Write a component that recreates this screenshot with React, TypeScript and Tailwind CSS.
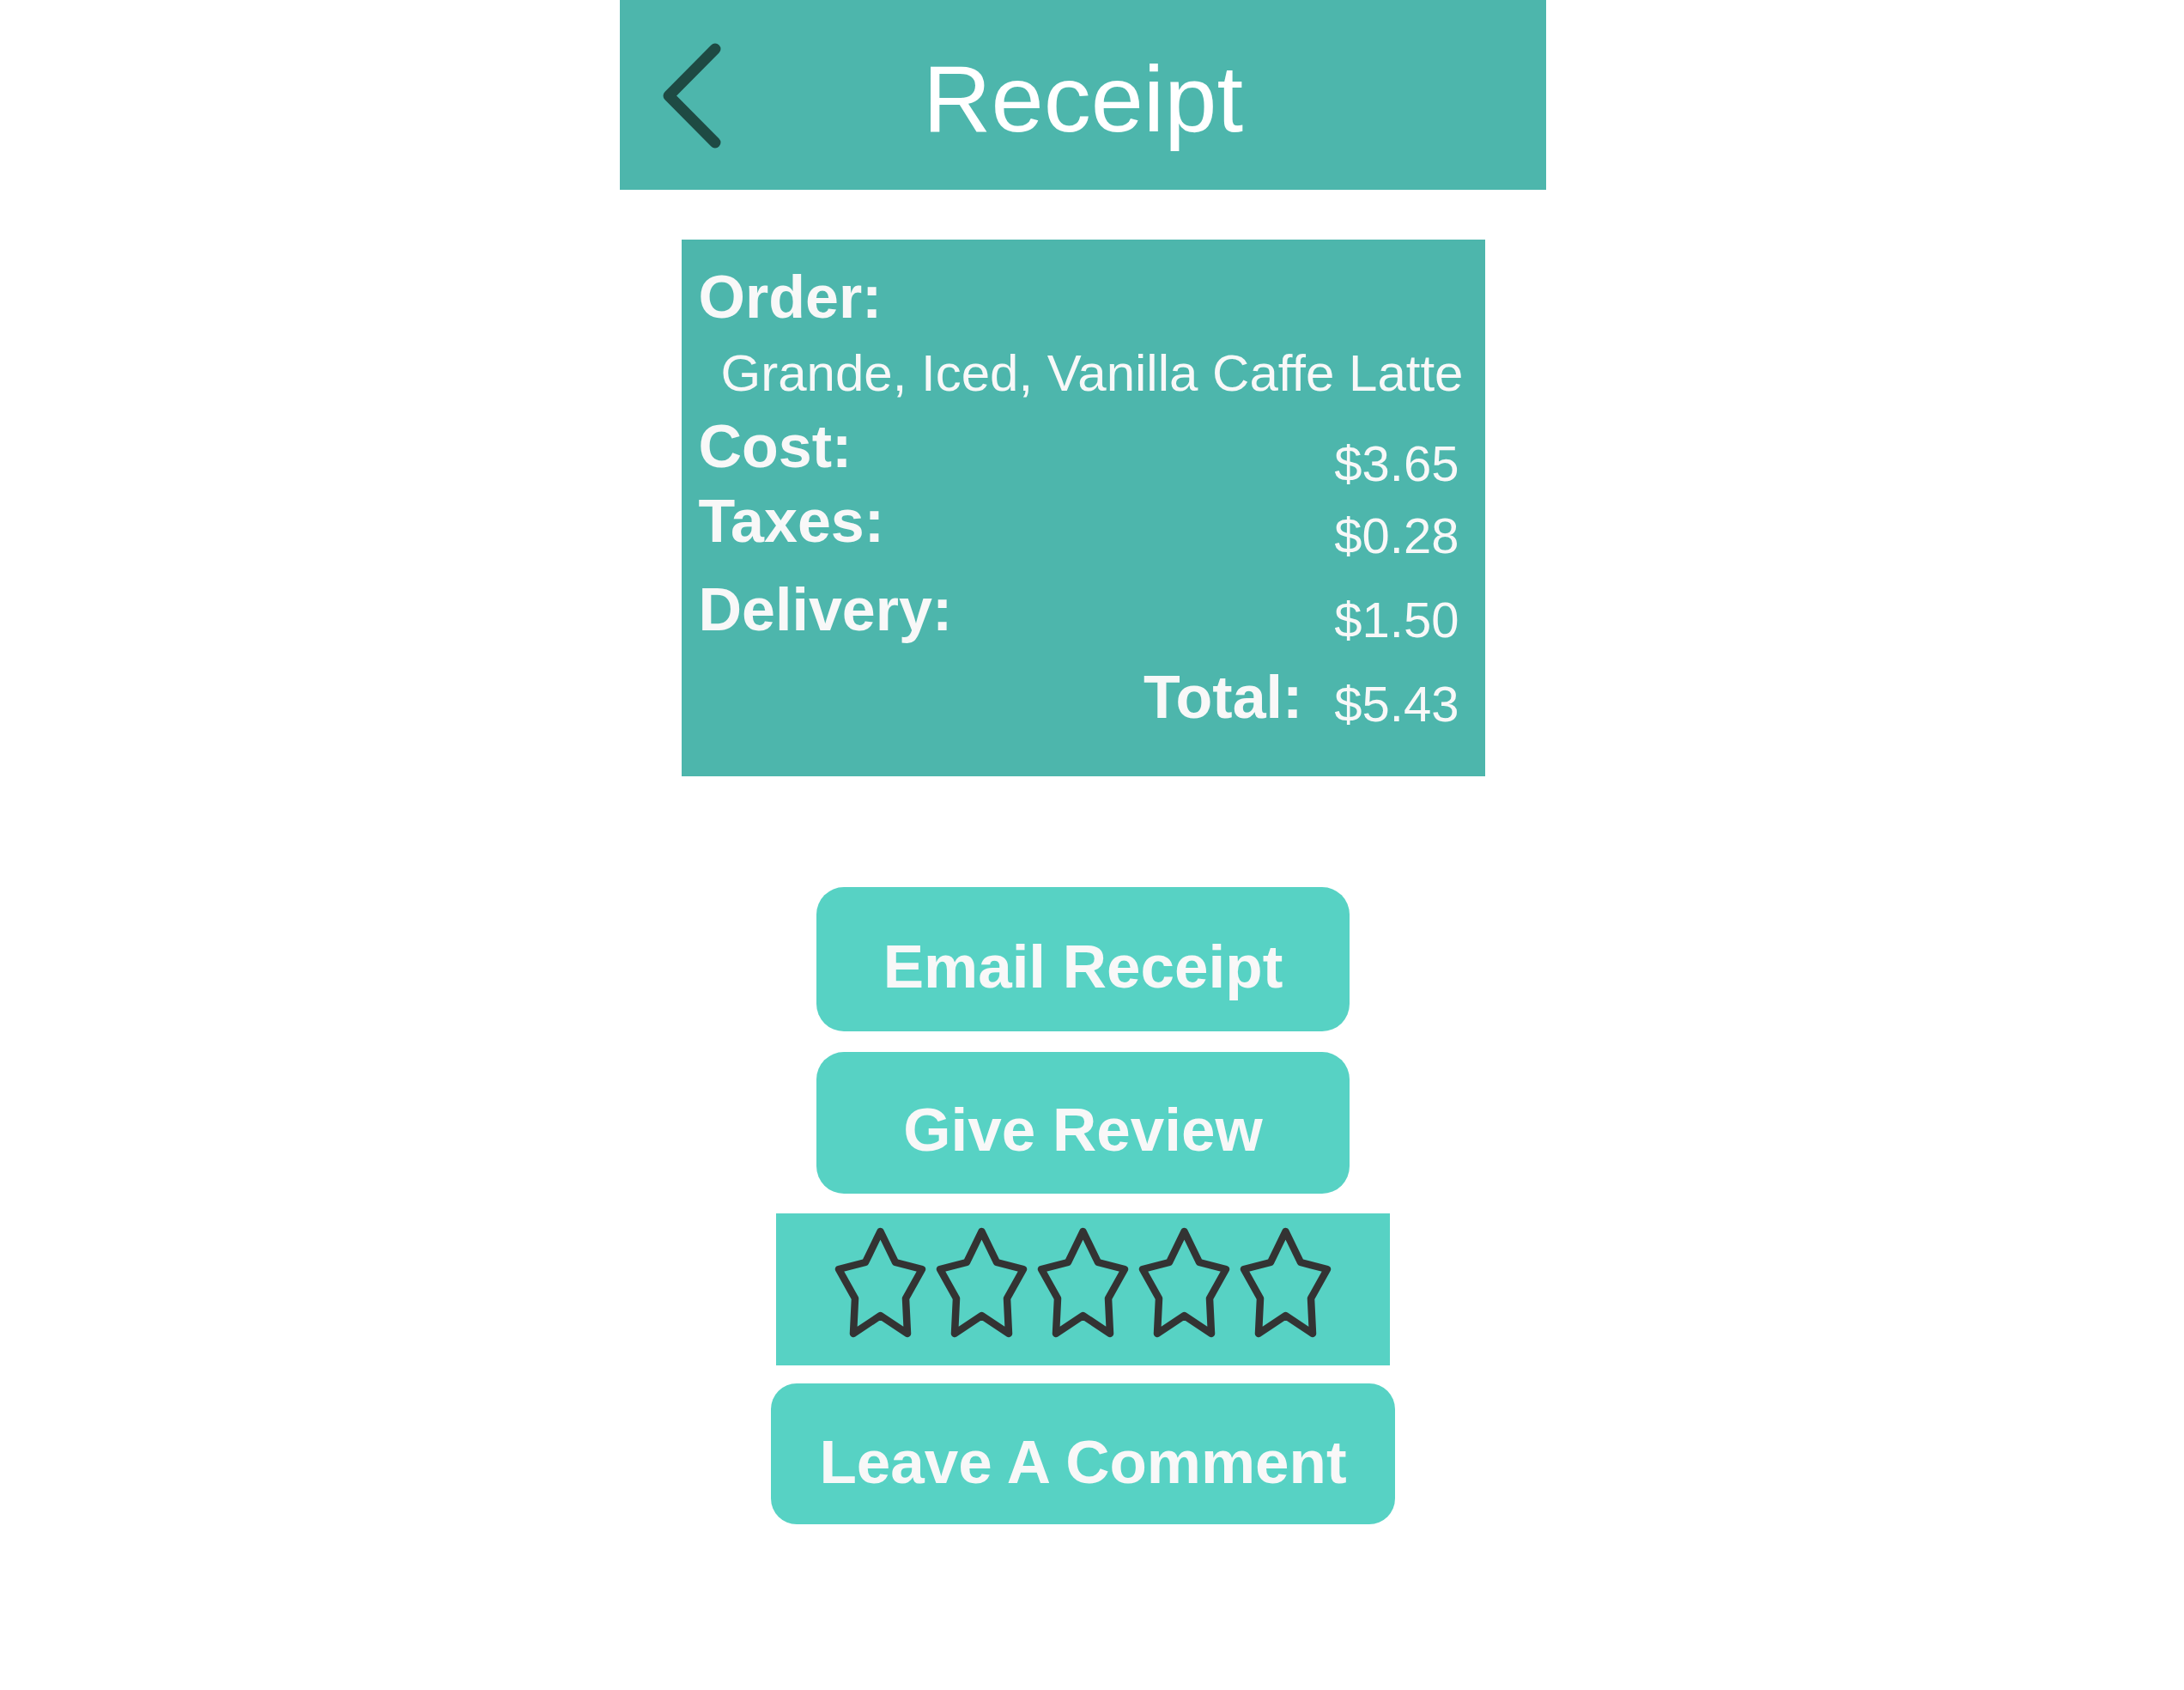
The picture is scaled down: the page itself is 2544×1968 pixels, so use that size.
import React from "react";

const font = "font-['Liberation_Sans',Arial,sans-serif]";

function Star() {
  return (
    <svg width="107" height="129" viewBox="0 0 107 129" fill="none">
      <path
        d="M53.5 5 L71 41 L102 49 L83 83 L85 124 L53.5 103 L22 124 L24 83 L5 49 L36 41 Z"
        stroke="#333333"
        strokeWidth="8.5"
        strokeLinejoin="round"
      />
    </svg>
  );
}

type RowProps = {
  label: string;
  value: string;
  rowTop: number;
  valueTop: number;
};

function CostRow({ label, value, rowTop, valueTop }: RowProps) {
  return (
    <div className="flex flex-row items-start justify-between" style={{ marginTop: rowTop }}>
      <div className="text-[70px] font-bold leading-none">{label}</div>
      <div className="text-[58px] leading-none" style={{ marginTop: valueTop }}>
        {value}
      </div>
    </div>
  );
}

export default function App() {
  return (
    <div className={`${font} min-h-screen w-full bg-white flex justify-center pr-[21px]`}>
      <div className="w-[1079px] flex flex-col items-center text-[#f8f8f8]">
        {/* Header */}
        <div className="w-full h-[221px] bg-[#4DB6AC] grid grid-cols-[1fr_auto_1fr] items-start">
          <div className="pl-[50px] pt-[49px]">
            <svg width="70" height="125" viewBox="0 0 70 125" fill="none">
              <path
                d="M61 8 L7 62.5 L61 117"
                stroke="#1E4A43"
                strokeWidth="13"
                strokeLinecap="round"
                strokeLinejoin="round"
              />
            </svg>
          </div>
          <div className="pt-[60px] text-[110px] leading-none text-white">Receipt</div>
          <div />
        </div>

        {/* Receipt card */}
        <div className="mt-[58px] w-[936px] h-[625px] bg-[#4DB6AC] pl-[20px] pr-[30px] pt-[32px] flex flex-col">
          <div className="text-[70px] font-bold leading-none">Order:</div>
          <div className="mt-[24px] ml-[26px] text-[60px] leading-none whitespace-nowrap">
            Grande, Iced, Vanilla Caffe Latte
          </div>
          <CostRow label="Cost:" value="$3.65" rowTop={20} valueTop={26} />
          <CostRow label="Taxes:" value="$0.28" rowTop={3} valueTop={23} />
          <CostRow label="Delivery:" value="$1.50" rowTop={22} valueTop={18} />
          <div className="mt-[26px] flex flex-row items-start justify-end gap-[37px]">
            <div className="text-[70px] font-bold leading-none">Total:</div>
            <div className="mt-[14px] text-[58px] leading-none">$5.43</div>
          </div>
        </div>

        {/* Actions */}
        <button className="mt-[129px] w-[621px] h-[168px] rounded-[32px] bg-[#57D2C4] pt-[16px] text-[71px] font-bold leading-none">
          Email Receipt
        </button>
        <button className="mt-[24px] w-[621px] h-[165px] rounded-[32px] bg-[#57D2C4] pt-[16px] text-[71px] font-bold leading-none">
          Give Review
        </button>
        <div className="mt-[23px] w-[715px] h-[177px] bg-[#57D2C4] flex flex-row justify-center items-start pt-[16px] gap-[11px]">
          <Star />
          <Star />
          <Star />
          <Star />
          <Star />
        </div>
        <button className="mt-[21px] w-[727px] h-[164px] rounded-[30px] bg-[#57D2C4] pt-[18px] text-[71px] font-bold leading-none">
          Leave A Comment
        </button>
      </div>
    </div>
  );
}
